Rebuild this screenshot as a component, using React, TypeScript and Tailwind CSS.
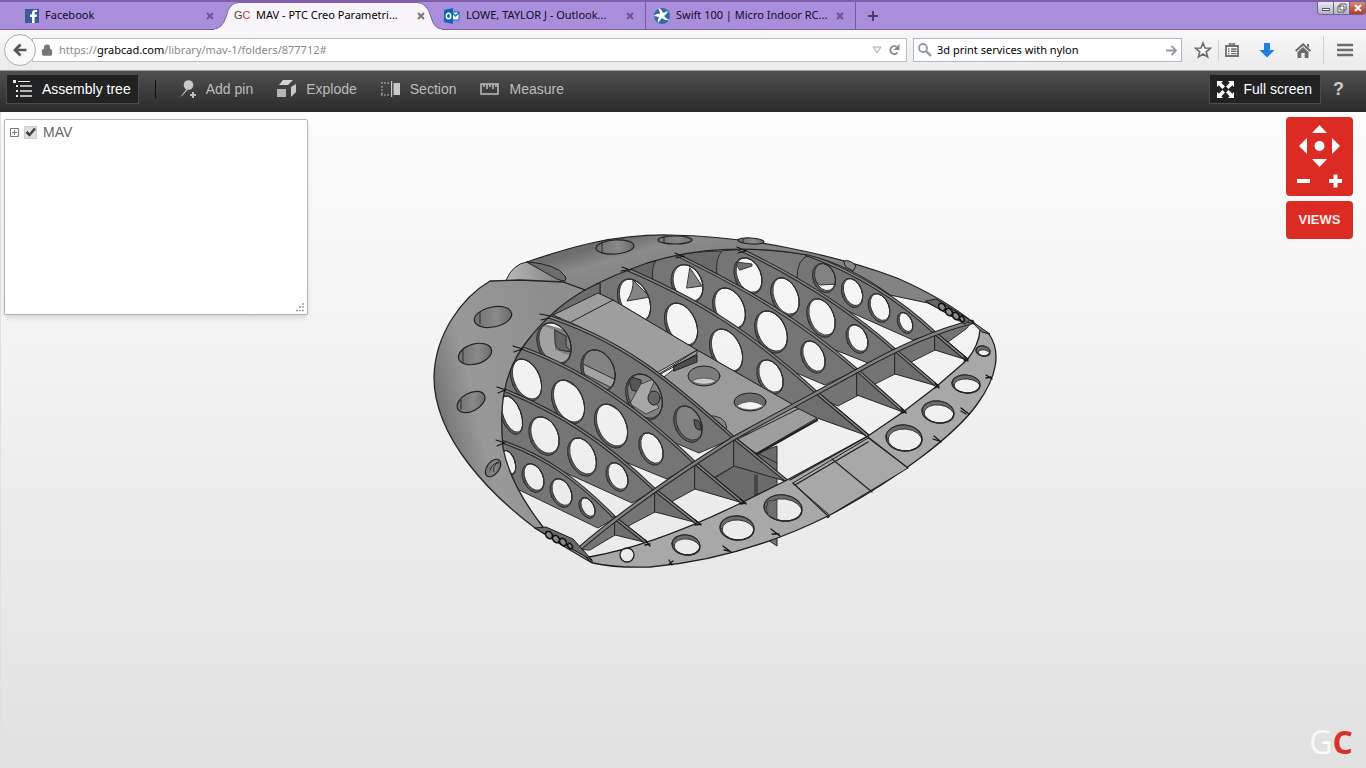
import React from "react";
import { Lock } from "lucide-react";

type Hole = [cx: number, cy: number, rx: number, ry: number, rot: number];

const ellipsePath = ([cx, cy, rx, ry, rot]: Hole) => {
  const a = (rot * Math.PI) / 180;
  const dx = rx * Math.cos(a);
  const dy = rx * Math.sin(a);
  return `M${cx - dx} ${cy - dy}A${rx} ${ry} ${rot} 1 1 ${cx + dx} ${cy + dy}A${rx} ${ry} ${rot} 1 1 ${cx - dx} ${cy - dy}Z`;
};

interface RibData {
  face: string;
  top: string;
  holes: Hole[];
}

const backRibs: RibData[] = [
  {
    face: "M810 255C855 272 895 298 935 333L913 340L850 312L797 281Q796 258 810 255Z",
    top: "M806 254C855 272 900 300 935 333L967 360",
    holes: [[824, 278, 11, 15, -20], [852, 293, 10, 15, -20], [879, 308, 10, 15, -22], [905, 323, 7, 11, -24]],
  },
  {
    face: "M740 250C795 275 850 310 895 350L868 363L825 346L760 304L717 276Q715 258 722 251Z",
    top: "M737 248C795 275 850 310 895 350L937 386",
    holes: [[748, 276, 13, 19, -22], [785, 297, 13, 20, -22], [821, 318, 13, 20, -22], [857, 339, 10, 15, -24]],
  },
  {
    face: "M678 255C745 288 800 320 857 370L825 385L787 369L707 312L653 281Q651 266 656 261Z",
    top: "M675 254C745 288 800 320 857 370L903 411",
    holes: [[687, 284, 15, 20, -24], [729, 309, 15, 22, -24], [771, 332, 15, 22, -24], [813, 357, 11, 17, -24]],
  },
  {
    face: "M625 269C700 300 750 332 817 393L797 407L697 350L613 300L600 294V283Z",
    top: "M622 267C700 300 750 332 817 393L868 436",
    holes: [[634, 301, 15, 23, -24], [681, 325, 15, 23, -24], [726, 351, 15, 23, -24], [770, 377, 12, 18, -24]],
  },
];

const frontRibs: RibData[] = [
  {
    face: "M543 316C620 338 670 380 734 438L699 453L666 439L600 390L520 350L541 316Z",
    top: "M540 314C620 338 670 380 734 438L828 516",
    holes: [[554, 344, 16, 22, -24], [598, 371, 16, 22, -24], [644, 397, 17, 24, -24], [688, 424, 13, 19, -24]],
  },
  {
    face: "M515 347C580 366 640 410 695 463L667 479L618 459L560 420L500 392Z",
    top: "M513 345C580 366 640 410 695 463L743 503",
    holes: [[526, 380, 14, 22, -24], [568, 402, 15, 23, -24], [611, 426, 15, 23, -24], [651, 449, 11, 17, -24]],
  },
  {
    face: "M498 388C560 412 605 442 655 490L632 503L553 467L498 443Z",
    top: "M497 387C560 412 605 442 655 490L698 524",
    holes: [[511, 415, 10, 20, -20], [544, 436, 14, 20, -24], [582, 457, 13, 20, -24], [617, 477, 10, 15, -24]],
  },
  {
    face: "M500 441C545 455 580 482 615 518L598 528L515 488L498 450Z",
    top: "M497 440C545 455 580 482 615 518L648 544",
    holes: [[508, 463, 7, 13, -18], [533, 478, 10, 15, -24], [561, 493, 10, 15, -24], [587, 508, 7, 11, -28]],
  },
];

function Rib({ face, top, holes }: RibData) {
  return (
    <g>
      <path
        d={face + holes.map(ellipsePath).join("")}
        fill="#757575"
        fillRule="evenodd"
        stroke="#2c2c2c"
        strokeWidth="1"
      />
      {holes.map((h, i) => (
        <path
          key={i}
          d={ellipsePath(h) + ellipsePath([h[0] + 1, h[1] - 1, h[2] - 1, h[3] - 1, h[4]])}
          fill="#5a5a5a"
          fillRule="evenodd"
          stroke="#2c2c2c"
          strokeWidth="0.9"
        />
      ))}
      <path d={top} fill="none" stroke="#262626" strokeWidth="3.6" />
      <path d={top} fill="none" stroke="#848484" strokeWidth="1.500" />
    </g>
  );
}

const stripHoles: Hole[] = [
  [627, 555, 7, 7, 0],
  [686, 545, 14, 10, 8],
  [737, 528, 17, 12, 5],
  [783, 508, 19, 13, 8],
  [904, 438, 18, 13, 5],
  [938, 412, 16, 11, 8],
  [966, 384, 14, 9, 5],
  [983, 351, 7, 5, 10],
];

const skinHoles: Hole[] = [
  [493, 317, 19, 10, -12],
  [475, 354, 17, 10, -16],
  [471, 402, 15, 9, -28],
  [493, 468, 10, 6, -52],
  [615, 247, 19, 7, -4],
  [675, 240, 17, 4, 0],
  [751, 241, 13, 3, 4],
];

function Model() {
  return (
    <svg viewBox="430 230 570 345" className="h-[345px] w-[570px] shrink-0" role="img" aria-label="MAV model">
      <defs>
        <linearGradient id="leftSkin" gradientUnits="userSpaceOnUse" x1="434" y1="400" x2="560" y2="370">
          <stop offset="0" stopColor="#737373" />
          <stop offset="0.3" stopColor="#999999" />
          <stop offset="1" stopColor="#8e8e8e" />
        </linearGradient>
        <linearGradient id="topSkin" gradientUnits="userSpaceOnUse" x1="640" y1="234" x2="652" y2="275">
          <stop offset="0" stopColor="#6e6e6e" />
          <stop offset="0.4" stopColor="#8b8b8b" />
          <stop offset="1" stopColor="#838383" />
        </linearGradient>
        <linearGradient id="bump" x1="0" y1="0" x2="1" y2="0">
          <stop offset="0" stopColor="#b8b8b8" />
          <stop offset="1" stopColor="#7d7d7d" />
        </linearGradient>
        <linearGradient id="holeShade" x1="0" y1="0" x2="1" y2="0">
          <stop offset="0" stopColor="#707070" />
          <stop offset="0.6" stopColor="#8a8a8a" />
          <stop offset="1" stopColor="#6c6c6c" />
        </linearGradient>
      </defs>

      <g strokeLinejoin="round" strokeLinecap="round">
        {/* inner side of the upper skin */}
        <path d="M740 249Q775 249 808 255Q797 262 798 281Z" fill="#7a7a7a" stroke="#222" />
        <path d="M677 255Q698 251 722 251Q716 259 717 276Z" fill="#6a6a6a" stroke="#222" />
        <path d="M623 270Q636 265 656 261Q652 268 653 281Z" fill="#666" stroke="#222" />
        <path d="M633 280L650 297L627 301Q634 290 633 280Z" fill="#858585" stroke="#333" />
        <path d="M690 268L702 286L687 288Z" fill="#858585" stroke="#333" />
        <path d="M810 262L836 262L838 284L820 285L812 280Z" fill="#828282" stroke="#333" />
        <path d="M735 262L752 264L752 266L740 270Z" fill="#707070" stroke="#333" />
        {backRibs.map((r, i) => (
          <Rib key={i} {...r} />
        ))}

        {/* electronics deck */}
        <path d="M540 318L560 298L600 283V294L560 318Z" fill="#6c6c6c" stroke="#222" />
        <path d="M655 377L697 350L797 407L813 415L734 438L690 402Z" fill="#9b9b9b" stroke="#262626" />
        <path d="M655 376L674 365V369L664 377Z" fill="#eee" stroke="#333" />
        <path d="M674 366L697 355V362L674 371Z" fill="#4d4d4d" stroke="#222" />
        <path d="M553 315L598 293L613 300L697 350L653 375Q605 335 553 315Z" fill="#9e9e9e" stroke="#242424" />
        <path d="M571 322L613 300M697 350V354L655 377" fill="none" stroke="#222" />
        <path d="M538 322L600 340L700 410L712 436L690 442L640 422L580 390L538 364Z" fill="#828282" />
        <path d="M538 324L555 330V350L571 356V368L538 352Z" fill="#a2a2a2" />
        <path d="M555 330L566 336V346L571 352L560 350Q555 348 555 342Z" fill="#666" stroke="#292929" />
        <path d="M583 364L616 380L616 390L584 374Z" fill="#a2a2a2" stroke="#333" />
        <path d="M628 376L641 380V393L632 390Z" fill="#555" stroke="#222" />
        <path d="M641 384L656 378L650 391L659 408L646 414L630 404Z" fill="#a7a7a7" stroke="#444" />
        <ellipse cx="654" cy="398" rx="6" ry="7" fill="#666" stroke="#222" />
        <ellipse cx="704" cy="376" rx="16" ry="10" fill="#7c7c7c" stroke="#222" />
        <path d="M691 381Q704 375 717 381Q704 388 691 381Z" fill="#ccc" stroke="#444" strokeWidth="0.7" />
        <ellipse cx="750" cy="402" rx="16" ry="9" fill="#6c6c6c" stroke="#222" />
        <path d="M736 406Q750 397 764 406Q750 414 736 406Z" fill="#f2f2f2" stroke="#333" strokeWidth="0.7" />
        <path d="M706 416Q725 414 727 428L720 430Z" fill="#858585" stroke="#333" />
        <path d="M694 420Q701 418 701 430Q694 431 694 420Z" fill="#555" stroke="#222" />

        {/* centre bay */}
        <path d="M715 478L734 466L757 453L777 446V495L745 505L725 492Z" fill="#6b6b6b" stroke="#292929" />
        <path d="M755 475V500M757 475V500M757 453L777 463" stroke="#252525" fill="none" />
        <path d="M736 440L800 408L817 418L757 453Z" fill="#9e9e9e" stroke="#222" />
        <path d="M757 454L817 420" stroke="#222" strokeWidth="2.500" />
        <path d="M768 540L777 546V535Z" fill="#777" stroke="#222" />

        {frontRibs.map((r, i) => (
          <Rib key={i} {...r} />
        ))}

        {/* main spar faces */}
        <g fill="#747474" stroke="#2a2a2a">
          <path d="M935 333L972 322L966 329L948 342L935 350Z" />
          <path d="M895 350L935 333V350L913 361L895 374Z" />
          <path d="M857 370L895 350V374L875 384L857 396Z" />
          <path d="M817 393L857 370V396L838 406L817 396Z" />
          <path d="M695 463L734 438V466L715 477L695 489Z" />
          <path d="M655 490L695 463V489L673 501L655 512Z" />
          <path d="M615 518L655 490V512L632 524L615 534Z" />
          <path d="M580 549L615 518V535L590 550Z" />
        </g>
        {/* aft rib faces */}
        <g fill="#6e6e6e" stroke="#262626">
          <path d="M935 333L967 360L935 350Z" />
          <path d="M895 350L937 386L895 374Z" />
          <path d="M857 370L903 412L857 395Z" />
          <path d="M817 393L868 436L817 418L795 407Z" />
          <path d="M734 438L785 481L734 466Z" />
          <path d="M695 463L743 503L695 489Z" />
          <path d="M655 490L698 523L655 512Z" />
          <path d="M615 518L648 543L615 535Z" />
        </g>
        {[
          "M935 333L967 360",
          "M895 350L937 386",
          "M857 370L903 411",
          "M817 393L868 436",
          "M734 438L793 486",
          "M695 463L743 503",
          "M655 490L698 524",
          "M615 518L648 544",
        ].map((d) => (
          <g key={d} fill="none">
            <path d={d} stroke="#222" strokeWidth="3.600" />
            <path d={d} stroke="#8c8c8c" strokeWidth="1.500" />
          </g>
        ))}
        <g fill="none">
          <path d="M579 549Q640 497 734 438L857 371Q920 335 972 322" stroke="#222" strokeWidth="4.600" />
          <path d="M579 549Q640 497 734 438L857 371Q920 335 972 322" stroke="#828282" strokeWidth="2.500" />
        </g>

        {/* trailing edge */}
        <path
          d={
            "M589 557C635 549 690 528 743 502L787 480L868 436L903 412L937 386L967 360Q979 345 980 330L989 334C1002 353 996 378 978 403C956 435 894 481 830 515C770 545 710 562 650 567Q614 568 593 563Z" +
            stripHoles.map(ellipsePath).join("")
          }
          fill="#a8a8a8"
          fillRule="evenodd"
          stroke="#1f1f1f"
          strokeWidth="1.300"
        />
        {stripHoles.slice(1).map((h, i) => (
          <path
            key={i}
            d={ellipsePath(h) + ellipsePath([h[0] + 1, h[1] + 2, h[2] - 1, h[3] - 2, h[4]])}
            fill="#6b6b6b"
            fillRule="evenodd"
            stroke="#222"
            strokeWidth="0.9"
          />
        ))}
        <path d="M768 501L777 500V520L768 515Z" fill="#707070" stroke="#333" strokeWidth="0.8" />
        <path d="M793 483L868 438L908 468L830 515Z" fill="#a8a8a8" stroke="#222" />
        <path d="M832 459L872 492M793 483L828 516M868 437L908 468" stroke="#222" strokeWidth="1.200" />
        <path d="M790 480L868 436M795 485L868 442" stroke="#222" strokeWidth="1.400" />
        <path
          d="M645 540l5 6m-5 -1l5 -1M695 520l6 5m-6 0l6 -1M740 499l6 5m-6 0l6 -1M669 560l3 5m1 -4l-4 3M723 546l8 6m-7 -2l5 1M771 529l9 7m-8 -2l7 0M901 409l5 4m-5 0l5 -1M935 383l4 5m-4 0l4 -2M964 357l4 4m-4 0l4 -2M934 436l7 6m-8 -3l6 2M961 408l8 6m-8 -3l5 3M986 375l6 4m-6 -1l5 -1"
          stroke="#151515"
          strokeWidth="1.300"
        />

        {/* outer skin */}
        <path
          d="M527 262C570 247 615 234 670 235C745 236 830 253 897 278Q945 299 975 324L966 322L928 303L890 295C860 273 833 261 808 255C755 246 700 247 650 262Q610 276 585 290L563 282Z"
          fill="url(#topSkin)"
          stroke="#242424"
          strokeWidth="1.200"
        />
        <path d="M506 280Q513 264 527 262Q558 267 565 282Z" fill="url(#bump)" stroke="#242424" />
        <path d="M527 262Q557 264 565 276Q569 284 557 279Z" fill="#6d6d6d" stroke="#222" />
        <path
          d="M490 281L520 280L563 282L585 290Q553 308 528 340C503 371 499 406 503 448C508 474 522 500 543 527L565 536L592 563Q564 547 535 528C494 497 434 440 434 377C435 333 463 297 490 281Z"
          fill="url(#leftSkin)"
          stroke="#242424"
          strokeWidth="1.300"
        />
        {skinHoles.map((h, i) => (
          <path key={i} d={ellipsePath(h)} fill="url(#holeShade)" stroke="#222" strokeWidth="1.200" />
        ))}
        <path
          d="M480 313V324M463 349V362M461 400V409M490 470Q494 461 499 463M494 472Q492 466 498 462M602 243V252M664 237V243M743 239V243"
          fill="none"
          stroke="#2b2b2b"
        />
        <path d="M844 261Q850 259 856 266L853 271L846 267Z" fill="#888" stroke="#222" />

        {/* leading edge tips */}
        <path d="M926 301L936 299L970 320L965 324Z" fill="#666" stroke="#1a1a1a" />
        <g fill="#8a8a8a" stroke="#111" strokeWidth="1.600">
          <ellipse cx="942" cy="307" rx="3" ry="4" transform="rotate(-35 942 307)" />
          <ellipse cx="949" cy="312" rx="3" ry="4" transform="rotate(-35 949 312)" />
          <ellipse cx="956" cy="316" rx="3" ry="4" transform="rotate(-35 956 316)" />
          <ellipse cx="962" cy="319" rx="2" ry="3" transform="rotate(-35 962 319)" />
        </g>
        <path d="M970 320L990 334L982 332Z" fill="#777" stroke="#1a1a1a" />
        <path d="M535 528L546 527L573 539L592 560Z" fill="#696969" stroke="#1a1a1a" />
        <g fill="#8a8a8a" stroke="#111" strokeWidth="1.600">
          <ellipse cx="549" cy="535" rx="3" ry="4" transform="rotate(-35 549 535)" />
          <ellipse cx="556" cy="539" rx="3" ry="4" transform="rotate(-35 556 539)" />
          <ellipse cx="563" cy="542" rx="3" ry="4" transform="rotate(-35 563 542)" />
          <ellipse cx="570" cy="546" rx="2" ry="3" transform="rotate(-35 570 546)" />
        </g>
        <path
          d="M622 267l8 3m-9 1l6 -1M675 253l9 4m-8 1l8 -2M737 247l9 4m-8 2l8 -2M540 314l10 2m-9 4l8 -2M513 346l10 3m-9 3l8 -3M497 387l9 3m-8 3l7 -3M496 440l9 3m-8 3l7 -3"
          fill="none"
          stroke="#151515"
          strokeWidth="1.200"
        />
      </g>
    </svg>
  );
}

function FacebookIcon() {
  return (
    <svg viewBox="0 0 14 14" className="size-[14px] shrink-0">
      <path d="M0 0H14V14H0Z" fill="#3b5a98" />
      <path d="M12 3H10.6Q9.6 3 9.6 4V5.6H12L11.6 8H9.6V14H7V8H5V5.6H7V3.8Q7 .9 10 .9H12Z" fill="#fff" />
    </svg>
  );
}

function OutlookIcon() {
  return (
    <svg viewBox="0 0 16 16" className="size-4 shrink-0">
      <path d="M8 4H15V12H8Z" fill="#fff" stroke="#0b6fbe" />
      <path d="M8 4.5L11.5 8L15 4.5" fill="none" stroke="#0b6fbe" strokeWidth="1.4" />
      <path d="M0 2L9 0V16L0 14Z" fill="#0b67b2" />
      <ellipse cx="4.5" cy="8" rx="2.2" ry="2.8" fill="none" stroke="#fff" strokeWidth="1.5" />
    </svg>
  );
}

function SwiftIcon() {
  return (
    <svg viewBox="0 0 16 16" className="size-4 shrink-0">
      <circle cx="8" cy="8" r="8" fill="#326ba7" />
      <path d="M4 0Q8 1 9 5L14 3Q13 6 10 8Q12 11 16 12Q11 13 8 10Q6 12 4 15Q3 12 5 9L0 8Q3 5 6 6Q6 3 4 0Z" fill="#fff" />
    </svg>
  );
}

function GcMark({ className, first, second }: { className: string; first: string; second: string }) {
  return (
    <span className={className} aria-label="GrabCAD">
      <span className={first}>G</span>
      <span className={second}>C</span>
    </span>
  );
}

function CloseX({ label, color = "#6b5292" }: { label: string; color?: string }) {
  return (
    <button type="button" aria-label={label} className="ml-auto shrink-0">
      <svg viewBox="0 0 8 8" className="size-2">
        <path d="M1 1L7 7M7 1L1 7" stroke={color} strokeWidth="2" />
      </svg>
    </button>
  );
}

function Tab({ icon, children }: { icon: React.ReactNode; children: string }) {
  return (
    <div className="flex h-full w-[210px] items-center gap-1.5 border-r border-[#765a9e] pr-[11px] pl-2">
      {icon}
      <span className="whitespace-nowrap">{children}</span>
      <CloseX label={`Close ${children}`} />
    </div>
  );
}

function TabBar() {
  return (
    <header className="flex h-[30px] border-t-2 border-b border-[#7f5fa9] bg-[#a98edc] font-['Noto_Sans','Open_Sans',sans-serif] text-[11px] text-[#160b28]">
      <div className="flex w-[214px] items-center gap-1.5 pl-[25px]">
        <FacebookIcon />
        <span>Facebook</span>
        <CloseX label="Close Facebook" />
      </div>
      <div className="relative flex w-[228px] items-center gap-1.5 pr-[17px] pl-5">
        <svg viewBox="0 0 228 29" className="absolute top-0 left-0 h-[29px] w-[228px]" aria-hidden="true">
          <path d="M0 29V27Q8 27 12 15Q15 .5 25 .5H203Q213 .5 217 15Q220 27 228 27V29Z" fill="#f7f5f9" />
          <path d="M0 27Q8 27 12 15Q15 .5 25 .5H203Q213 .5 217 15Q220 27 228 27" fill="none" stroke="#7f5fa9" />
        </svg>
        <GcMark
          className="relative w-4 shrink-0 font-['Liberation_Sans',sans-serif] text-[11px]"
          first="text-[#444]"
          second="text-[#d8322b]"
        />
        <span className="relative whitespace-nowrap text-black">MAV - PTC Creo Parametri...</span>
        <span className="relative ml-auto flex">
          <CloseX label="Close MAV" color="#777" />
        </span>
      </div>
      <div className="flex">
        <div className="-ml-1.5 h-full">
          <Tab icon={<OutlookIcon />}>LOWE, TAYLOR J - Outlook...</Tab>
        </div>
        <Tab icon={<SwiftIcon />}>Swift 100 | Micro Indoor RC...</Tab>
      </div>
      <button type="button" aria-label="New tab" className="ml-3">
        <svg viewBox="0 0 10 10" className="size-2.5">
          <path d="M5 0V10M0 5H10" stroke="#4c3b66" strokeWidth="2" />
        </svg>
      </button>
      <div className="ml-auto flex h-[13px] w-[49px] overflow-hidden rounded-b border border-t-0 border-[#6c6684]">
        <button type="button" aria-label="Minimize" className="flex flex-1 items-center justify-center bg-linear-to-b from-[#ece8f5] to-[#b4adc6]">
          <svg viewBox="0 0 10 10" className="size-2.5"><path d="M1.500 5.500H8.500V7.500H1.500Z" fill="#fff" stroke="#555" /></svg>
        </button>
        <button type="button" aria-label="Restore" className="flex flex-1 items-center justify-center border-x border-[#6c6684] bg-linear-to-b from-[#ece8f5] to-[#b4adc6]">
          <svg viewBox="0 0 10 10" className="size-2.5"><path d="M3 1H9V7H3Z M1 3H7V9H1Z" fill="#fff" stroke="#555" /></svg>
        </button>
        <button type="button" aria-label="Close window" className="flex flex-1 items-center justify-center bg-linear-to-b from-[#d98778] to-[#b13724]">
          <svg viewBox="0 0 10 10" className="size-2.5"><path d="M2 2L8 8M8 2L2 8" stroke="#fff" strokeWidth="2" /></svg>
        </button>
      </div>
    </header>
  );
}

function NavBar() {
  return (
    <nav className="flex h-[41px] items-center border-b border-[#a2a2a2] bg-linear-to-b from-[#f8f7f9] to-[#ebebeb] pr-[13px] pl-1 font-['Noto_Sans','Open_Sans',sans-serif] text-[11px]">
      <button
        type="button"
        aria-label="Back"
        className="z-10 flex size-8 shrink-0 items-center justify-center rounded-full border border-[#aaa] bg-[#f9f9f9]"
      >
        <svg viewBox="0 0 14 14" className="size-3.5">
          <path d="M7.500 1.500L2 7L7.500 12.500M2 7H13.500" fill="none" stroke="#555" strokeWidth="2.700" />
        </svg>
      </button>
      <div className="-ml-1 flex h-6 flex-1 items-center border border-[#bdbdbd] bg-white pr-1.5 pl-2">
        <Lock className="size-3 shrink-0 text-[#777]" fill="#777" strokeWidth={2.5} />
        <a href="#" className="ml-1.5 flex-1 text-[#888]">
          https://<span className="text-black">grabcad.com</span>/library/mav-1/folders/877712#
        </a>
        <button type="button" aria-label="Address history">
          <svg viewBox="0 0 10 8" className="h-2 w-2.5"><path d="M1 1H9L5 7Z" fill="#eee" stroke="#aaa" /></svg>
        </button>
        <button type="button" aria-label="Reload" className="ml-1.5">
          <svg viewBox="0 0 12 12" className="size-3">
            <path d="M8.500 2.700A4 4 0 1 0 9.500 8.500" fill="none" stroke="#888" strokeWidth="1.800" />
            <path d="M11.500 0V6H5.500Z" fill="#888" />
          </svg>
        </button>
      </div>
      <form className="ml-1.5 flex h-6 w-[269px] items-center border border-[#aeb9c6] bg-white px-1">
        <label htmlFor="web-search">
          <svg viewBox="0 0 14 14" className="size-3.5" role="img" aria-label="Search the web">
            <circle cx="5" cy="5" r="4" fill="none" stroke="#999" strokeWidth="1.800" />
            <path d="M8 8L13 13" stroke="#999" strokeWidth="2.400" />
          </svg>
        </label>
        <input id="web-search" type="text" defaultValue="3d print services with nylon" className="ml-[5px] min-w-0 flex-1 bg-transparent text-black outline-none" />
        <button type="button" aria-label="Go">
          <svg viewBox="0 0 11 11" className="size-[11px]"><path d="M0 5.500H9M5.500 1L10 5.500L5.500 10" fill="none" stroke="#999" strokeWidth="1.800" /></svg>
        </button>
      </form>
      <button type="button" aria-label="Bookmark" className="ml-3">
        <svg viewBox="0 0 18 18" className="size-[18px]">
          <path d="M9 2L11 7L16.300 7.300L12.200 10.800L13.600 16L9 13L4.400 16L5.800 10.800L1.700 7.300L7 7Z" fill="#fafafa" stroke="#6d6d6d" strokeWidth="1.600" />
        </svg>
      </button>
      <span className="ml-1.5 h-5 w-px bg-[#d0d0d0]" />
      <button type="button" aria-label="Bookmarks list" className="ml-1.5">
        <svg viewBox="0 0 14 14" className="size-3.5">
          <path d="M1 3H13V13H1Z" fill="#fafafa" stroke="#6d6d6d" strokeWidth="1.800" />
          <path d="M4.500 3V1H9.500V3M3 6H4.500M6 6H11.500M3 8.300H4.500M6 8.300H11.500M3 10.600H4.500M6 10.600H11.500" fill="none" stroke="#6d6d6d" strokeWidth="1.400" />
        </svg>
      </button>
      <button type="button" aria-label="Downloads" className="ml-5">
        <svg viewBox="0 0 16 15" className="h-[15px] w-4"><path d="M5 0H11V7H15.500L8 14.500L.5 7H5Z" fill="#1d7fd8" /></svg>
      </button>
      <button type="button" aria-label="Home" className="ml-5">
        <svg viewBox="0 0 16 15" className="h-[15px] w-4">
          <path d="M8 0L16 7.300L14.700 8.700L8 2.700L1.300 8.700L0 7.300Z" fill="#6d6d6d" />
          <path d="M8 4L13.500 9V15H9.700V10H6.300V15H2.500V9ZM12 1H14V5L12 3Z" fill="#6d6d6d" />
        </svg>
      </button>
      <span className="ml-3 h-7 w-px bg-[#cfcfcf]" />
      <button type="button" aria-label="Open menu" className="ml-[13px]">
        <svg viewBox="0 0 16 14" className="h-3.5 w-4"><path d="M0 2H16M0 7H16M0 12H16" stroke="#6d6d6d" strokeWidth="2.600" /></svg>
      </button>
    </nav>
  );
}

function Toolbar() {
  const item = "flex items-center gap-2.5 text-[#bcbcbc]";
  return (
    <div className="flex h-[41px] items-start bg-linear-to-b from-[#505050] to-[#2b2b2b] pt-0.5 pr-[22px] pl-1.5 font-['Liberation_Sans',Arial,sans-serif] text-[14px]">
      <button type="button" className="mt-px flex h-[30px] items-center gap-2.5 border border-[#4c4c4c] bg-[#222] pr-[7px] pl-1.5 text-white">
        <svg viewBox="0 0 19 18" className="h-[18px] w-[19px]">
          <path d="M0 0H3V3H0ZM3 5H5V7H3ZM3 10H5V12H3ZM3 15H5V17H3ZM5 1H17V2H5ZM7 5.300H19V6.700H7ZM7 10.300H19V11.700H7ZM7 15.300H19V16.700H7Z" fill="#e8e8e8" />
        </svg>
        Assembly tree
      </button>
      <span className="mt-[7px] ml-4 h-[18px] w-px bg-[#111]" />
      <div className="ml-6 flex h-8 items-center gap-6">
        <button type="button" className={item}>
          <svg viewBox="0 0 16 18" className="h-[18px] w-4">
            <circle cx="8.500" cy="5" r="4.800" fill="#c9c9c9" />
            <path d="M7 8L5 11L0 17L3 15L8 9.500ZM10 14H16V16H10ZM12 12H14V18H12Z" fill="#bcbcbc" />
          </svg>
          Add pin
        </button>
        <button type="button" className={item}>
          <svg viewBox="0 0 19 18" className="h-[18px] w-[19px]">
            <path d="M0 9H9V17H0Z" fill="#b5b5b5" />
            <path d="M6 0H16L11 5H2Z" fill="#d5d5d5" />
            <path d="M14 7L19 4V12L14 17Z" fill="#c9c9c9" />
          </svg>
          Explode
        </button>
        <button type="button" className={item}>
          <svg viewBox="0 0 19 16" className="h-4 w-[19px]">
            <path d="M0 2H9M0 14H9M1 5V14" fill="none" stroke="#aaa" strokeWidth="1.400" strokeDasharray="1.500 1.700" />
            <path d="M10 0H11.200V16H10ZM12.500 2H19V14H12.500Z" fill="#c9c9c9" />
          </svg>
          Section
        </button>
        <button type="button" className={item}>
          <svg viewBox="0 0 19 12" className="h-3 w-[19px]">
            <path d="M1 1H18V11H1ZM4 1V4M7 1V6M10 1V4M13 1V6M16 1V4" fill="none" stroke="#bcbcbc" strokeWidth="1.500" />
          </svg>
          Measure
        </button>
      </div>
      <button type="button" className="mt-px ml-auto flex h-[30px] items-center gap-2.5 border border-[#4c4c4c] bg-[#222] pr-2 pl-[7px] text-white">
        <svg viewBox="0 0 17 17" className="size-[17px]">
          <path d="M0 0H6L4.300 1.700L8 5.400L5.400 8L1.700 4.300L0 6ZM17 0H11L12.700 1.700L9 5.400L11.600 8L15.300 4.300L17 6ZM0 17H6L4.300 15.300L8 11.600L5.400 9L1.700 12.700L0 11ZM17 17H11L12.700 15.300L9 11.600L11.600 9L15.300 12.700L17 11Z" fill="#fff" />
        </svg>
        Full screen
      </button>
      <button type="button" aria-label="Help" className="ml-3 h-8 text-[18px] font-bold text-[#ccc]">
        ?
      </button>
    </div>
  );
}

function TreePanel() {
  return (
    <aside className="mt-[7px] ml-1 flex h-[196px] w-[304px] flex-col justify-between rounded-xs border border-[#b4b4b4] bg-white shadow-md">
      <div className="flex items-center pt-1 pl-[5px]">
        <button type="button" aria-label="Expand MAV" className="shrink-0">
          <svg viewBox="0 0 9 9" className="size-[9px]"><path d="M.5.5H8.500V8.500H.5ZM2 4.500H7M4.500 2V7" fill="none" stroke="#777" /></svg>
        </button>
        <label className="relative ml-[5px] flex items-center gap-1.5 font-['Liberation_Sans',Arial,sans-serif] text-[14px] leading-4 text-[#666]">
          <input type="checkbox" defaultChecked className="peer size-[13px] appearance-none border border-[#ccc] bg-[#dedede]" />
          <svg viewBox="0 0 13 13" className="pointer-events-none absolute left-0 hidden size-[13px] peer-checked:block">
            <path d="M2.500 6L5.500 9L11 2.500" fill="none" stroke="#444" strokeWidth="2.500" />
          </svg>
          MAV
        </label>
      </div>
      <svg viewBox="0 0 9 9" className="mr-[3px] mb-[2px] size-[9px] self-end" aria-hidden="true">
        <path d="M7 1H9M4 4H6M7 4H9M1 7.500H3M4 7.500H6M7 7.500H9" stroke="#999" strokeWidth="1.500" />
      </svg>
    </aside>
  );
}

function ViewControls() {
  return (
    <div className="flex flex-col items-end pt-[5px] pr-[13px]">
      <div className="rounded bg-[#dc2b22]">
        <svg viewBox="0 0 67 79" className="h-[79px] w-[67px]" role="group" aria-label="Pan and zoom">
          <g fill="#fff">
            <circle cx="33.500" cy="29" r="5" />
            <path d="M33.500 8L41 16H26ZM33.500 50L26 42H41ZM13 29L21 21V37ZM54 29L46 21V37Z" />
            <path d="M11 62H24V66H11ZM43 62H56V66H43ZM47.500 57.500H51.500V70.500H47.500Z" />
          </g>
        </svg>
      </div>
      <button type="button" className="mt-[5px] h-[38px] w-[67px] rounded bg-[#dc2b22] font-['Liberation_Sans',Arial,sans-serif] text-[13px] font-bold text-[#ffe9e6]">
        VIEWS
      </button>
      <GcMark
        className="mt-auto mb-2 font-['Open_Sans',sans-serif] text-[32px] leading-9"
        first="text-[#fafafa]"
        second="font-bold text-[#d8322b]"
      />
    </div>
  );
}

export default function App() {
  return (
    <div className="flex min-h-screen flex-col">
      <TabBar />
      <NavBar />
      <Toolbar />
      <main className="flex flex-1 items-stretch border-l border-[#e0e0e0] bg-linear-to-b from-[#fdfdfd] to-[#e1e1e1]">
        <div className="-ml-px">
          <TreePanel />
        </div>
        <div className="flex flex-1 pt-[118px] pl-[122px]">
          <Model />
        </div>
        <ViewControls />
      </main>
    </div>
  );
}
